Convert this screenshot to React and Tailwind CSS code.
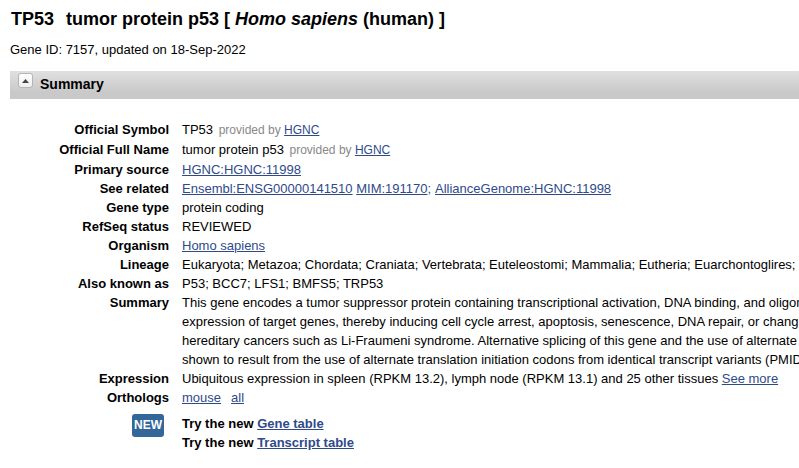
import React, { useState } from 'react';

const Link = ({ children }) => (
  <a href="#" className="text-[#2f4a8b] underline">{children}</a>
);

const ProvidedBy = () => (
  <span className="ml-[2px] text-[12px] text-[#888888]">
    provided by <Link>HGNC</Link>
  </span>
);

const Row = ({ label, tall, children }) => (
  <div className="flex">
    <dt className="w-[169px] shrink-0 text-right font-bold">{label}</dt>
    <dd className={tall ? 'ml-[13px] h-5' : 'ml-[13px]'}>{children}</dd>
  </div>
);

const App = () => {
  const [open, setOpen] = useState(true);

  return (
    <div className="h-[468px] w-full overflow-hidden bg-white font-['Liberation_Sans',Arial,sans-serif] text-[13px] leading-[19px] whitespace-nowrap text-black">
      <h1 className="ml-[11px] pt-2 text-[18px] leading-[22px] font-bold">
        <span className="mr-[12px]">TP53</span>
        tumor protein p53 [ <em>Homo sapiens</em> (human) ]
      </h1>
      <p className="mt-[10px] ml-[10px]">Gene ID: 7157, updated on 18-Sep-2022</p>

      {/* section header */}
      <div className="mt-3 ml-[10px] flex h-7 bg-linear-to-b from-[#e0e0e0] to-[#c9c9c9] to-75%">
        <button
          type="button"
          aria-label="Toggle summary"
          onClick={() => setOpen(!open)}
          className="mt-[2px] ml-2 flex h-[15px] w-[15px] items-center justify-center rounded-[3px] border border-[#b5b5b5] bg-linear-to-b from-white to-[#eeeeee]"
        >
          <svg width="7" height="4" viewBox="0 0 7 4">
            <path d="M3.5 0 L7 4 H0 Z" fill="#444444" />
          </svg>
        </button>
        <h2 className="ml-[7px] text-[14px] leading-[27px] font-bold">Summary</h2>
      </div>

      {open && (
        <dl className="mt-[21px]">
          <Row label="Official Symbol" tall>TP53 <ProvidedBy /></Row>
          <Row label="Official Full Name" tall>tumor protein p53 <ProvidedBy /></Row>
          <Row label="Primary source"><Link>HGNC:HGNC:11998</Link></Row>
          <Row label="See related">
            <Link>Ensembl:ENSG00000141510</Link> <Link>MIM:191170</Link>
            <span className="mr-px text-[#2f4a8b]">;</span> <Link>AllianceGenome:HGNC:11998</Link>
          </Row>
          <Row label="Gene type">protein coding</Row>
          <Row label="RefSeq status">REVIEWED</Row>
          <Row label="Organism"><Link>Homo sapiens</Link></Row>
          <Row label="Lineage">
            Eukaryota; Metazoa; Chordata; Craniata; Vertebrata; Euteleostomi; Mammalia; Eutheria; Euarchontoglires;
          </Row>
          <Row label="Also known as">P53; BCC7; LFS1; BMFS5; TRP53</Row>
          <Row label="Summary">
            This gene encodes a tumor suppressor protein containing transcriptional activation, DNA binding, and oligom<br />
            expression of target genes, thereby inducing cell cycle arrest, apoptosis, senescence, DNA repair, or chang<br />
            hereditary cancers such as Li-Fraumeni syndrome. Alternative splicing of this gene and the use of alternate<br />
            shown to result from the use of alternate translation initiation codons from identical transcript variants (PMID
          </Row>
          <Row label="Expression">
            Ubiquitous expression in spleen (RPKM 13.2), lymph node (RPKM 13.1) and 25 other tissues <Link>See more</Link>
          </Row>
          <Row label="Orthologs">
            <span className="mr-[10px]"><Link>mouse</Link></span>
            <Link>all</Link>
          </Row>
          <div className="mt-[7px] flex font-bold">
            <dt className="flex w-[164px] shrink-0 justify-end">
              <span className="h-[23px] w-8 rounded-[3px] bg-[#336699] text-center text-[12px] leading-[22px] text-white">NEW</span>
            </dt>
            <dd className="ml-[18px]">
              Try the new <Link>Gene table</Link><br />
              Try the new <Link>Transcript table</Link>
            </dd>
          </div>
        </dl>
      )}
    </div>
  );
};

export default App;
